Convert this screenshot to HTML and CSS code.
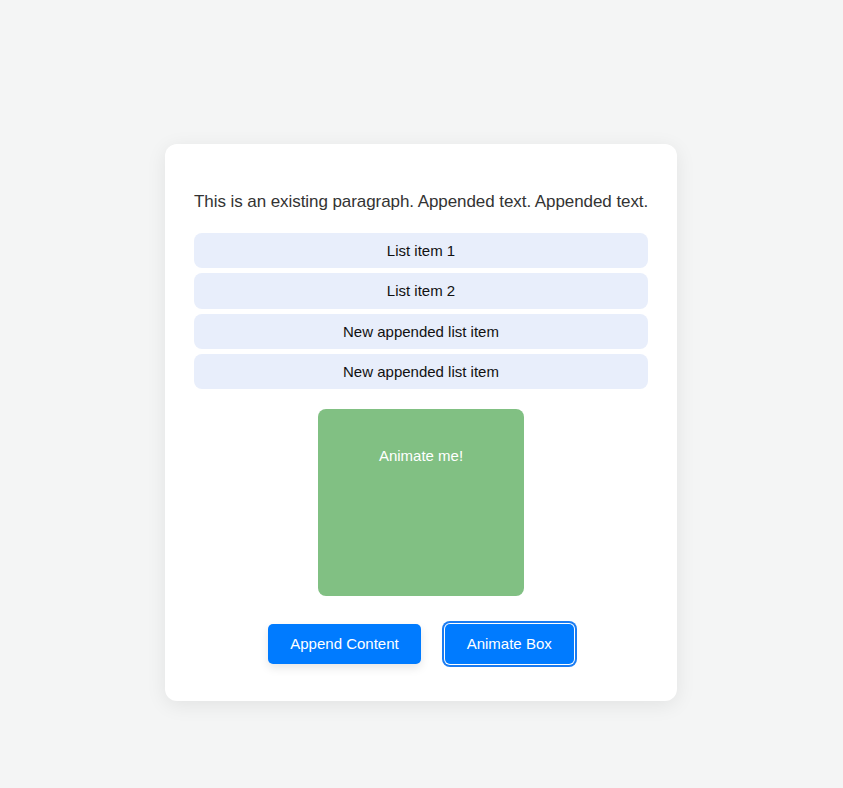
FILE: index.html
```html
<!DOCTYPE html>
<html lang="en">
<head>
<meta charset="utf-8">
<title>Append &amp; Animate</title>
<link rel="stylesheet" href="styles.css">
</head>
<body>
  <main class="card">
    <p class="intro">This is an existing paragraph. Appended text. Appended text.</p>
    <ul class="list">
      <li class="list-item">List item 1</li>
      <li class="list-item">List item 2</li>
      <li class="list-item">New appended list item</li>
      <li class="list-item">New appended list item</li>
    </ul>
    <div class="box">Animate me!</div>
    <div class="actions">
      <button class="btn btn-shadow" type="button">Append Content</button>
      <button class="btn btn-focus" type="button">Animate Box</button>
    </div>
  </main>
</body>
</html>
```

FILE: styles.css
```css
* {
  box-sizing: border-box;
}

html, body {
  margin: 0;
  padding: 0;
}

body {
  background: #f4f5f5;
  font-family: "Liberation Sans", Arial, sans-serif;
  color: #000;
  padding: 144px 1px 0 0;
  min-height: 788px;
}

.card {
  width: 512px;
  margin: 0 auto;
  background: #fff;
  border-radius: 12px;
  padding: 29px;
  box-shadow: 0 4px 20px rgba(0, 0, 0, 0.08);
}

.intro {
  margin: 17px 0 19px;
  font-size: 17px;
  line-height: 24px;
  letter-spacing: -0.07px;
  color: #333;
  white-space: nowrap;
}

.list {
  list-style: none;
  margin: 0 0 20px;
  padding: 0;
  display: flex;
  flex-direction: column;
  gap: 5px;
}

.list-item {
  background: #e8eefb;
  border-radius: 8px;
  padding: 9px 10px;
  font-size: 15px;
  line-height: 17.25px;
  text-align: center;
  color: #111;
}

.box {
  width: 206px;
  height: 187px;
  margin: 0 auto 28px;
  background: #81c083;
  border-radius: 8px;
  color: #fff;
  font-size: 15px;
  line-height: 17px;
  text-align: center;
  padding-top: 38px;
}

.actions {
  display: flex;
  justify-content: center;
  gap: 24px;
  margin-bottom: 8px;
}

.btn {
  font-family: "Liberation Sans", Arial, sans-serif;
  font-size: 15px;
  line-height: 18px;
  padding: 11px 22px;
  background: #007bff;
  color: #fff;
  border: none;
  border-radius: 5px;
  cursor: pointer;
}

.btn-shadow {
  box-shadow: 0 4px 10px rgba(0, 0, 0, 0.1);
}

.btn-focus {
  box-shadow: 0 0 0 1px #fff, 0 0 0 3px #1a7cf2;
}
```
